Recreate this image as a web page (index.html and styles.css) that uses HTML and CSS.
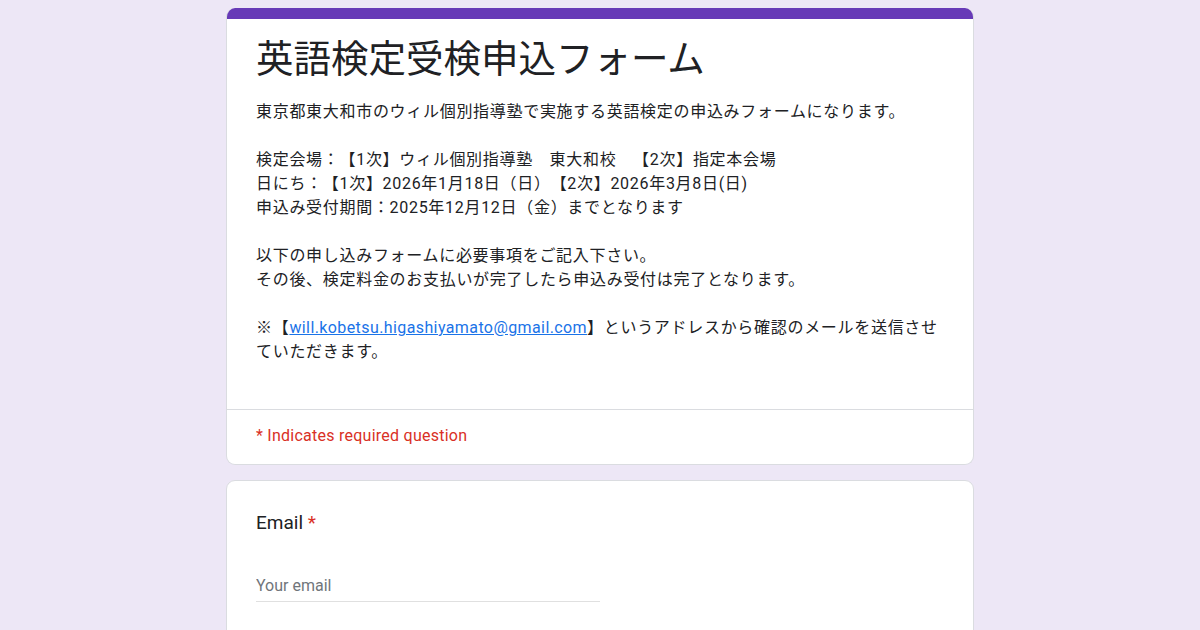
FILE: index.html
```html
<!DOCTYPE html>
<html lang="ja">
<head>
  <meta charset="UTF-8" />
  <meta name="viewport" content="width=device-width, initial-scale=1.0" />
  <title>英語検定受検申込フォーム</title>
  <link rel="stylesheet" href="styles.css">
</head>
<body>
  <div class="form">
    <div class="card header-card">
      <div class="accent"></div>
      <div class="header-body">
        <h1 class="form-title">英語検定受検申込フォーム</h1>
        <div class="form-desc">東京都東大和市のウィル個別指導塾で実施する英語検定の申込みフォームになります。<br>
<br>
検定会場：【1次】ウィル個別指導塾　東大和校　【2次】指定本会場<br>
日にち：【1次】2026年1月18日（日）【2次】2026年3月8日(日)<br>
申込み受付期間：2025年12月12日（金）までとなります<br>
<br>
以下の申し込みフォームに必要事項をご記入下さい。<br>
その後、検定料金のお支払いが完了したら申込み受付は完了となります。<br>
<br>
※【<a href="#">will.kobetsu.higashiyamato@gmail.com</a>】というアドレスから確認のメールを送信させていただきます。</div>
      </div>
      <div class="required-note">* Indicates required question</div>
    </div>

    <div class="card question-card">
      <div class="question-title">Email <span class="star">*</span></div>
      <div class="text-input">
        <input type="email" placeholder="Your email">
      </div>
    </div>
  </div>
</body>
</html>
```

FILE: styles.css
```css
body {
  background-color: #ede7f6;
  margin: 0;
  padding: 8px 0 0;
  font-family: Roboto, "Noto Sans CJK JP", sans-serif;
  color: #202124;
}
.form {
  width: 748px;
  margin: 0 auto;
}
.card {
  background: #fff;
  border: 1px solid #dadce0;
  border-radius: 9px;
  margin-bottom: 15px;
  overflow: hidden;
}
.header-card {
  border-top: none;
}
.accent {
  height: 11px;
  background: #673ab7;
}
.header-body {
  padding: 13px 29px 45px;
  border-bottom: 1px solid #dadce0;
}
.form-title {
  margin: 0 0 20px;
  font-family: "Noto Sans CJK JP", sans-serif;
  font-size: 37.5px;
  font-weight: 400;
  line-height: 48px;
  color: #202124;
}
.form-desc {
  font-size: 16px;
  line-height: 24px;
  letter-spacing: 0.7px;
  text-spacing-trim: space-all;
}
.form-desc a {
  color: #1a73e8;
  text-decoration: underline;
  letter-spacing: 0.4px;
}
.required-note {
  padding: 14px 29px 16px;
  font-size: 16px;
  line-height: 24px;
  color: #d93025;
  letter-spacing: 0.25px;
}
.question-card {
  padding: 28px 29px 40px;
}
.question-title {
  font-size: 19px;
  line-height: 28px;
  color: #202124;
}
.star {
  color: #d93025;
}
.text-input {
  margin-top: 37px;
  width: 344px;
  border-bottom: 1px solid #e0e0e0;
}
.text-input input {
  width: 100%;
  border: none;
  outline: none;
  padding: 0 0 3px;
  font-family: Roboto, sans-serif;
  font-size: 16px;
  line-height: 24px;
  color: #202124;
}
.text-input input::placeholder {
  color: #70757a;
}
```
